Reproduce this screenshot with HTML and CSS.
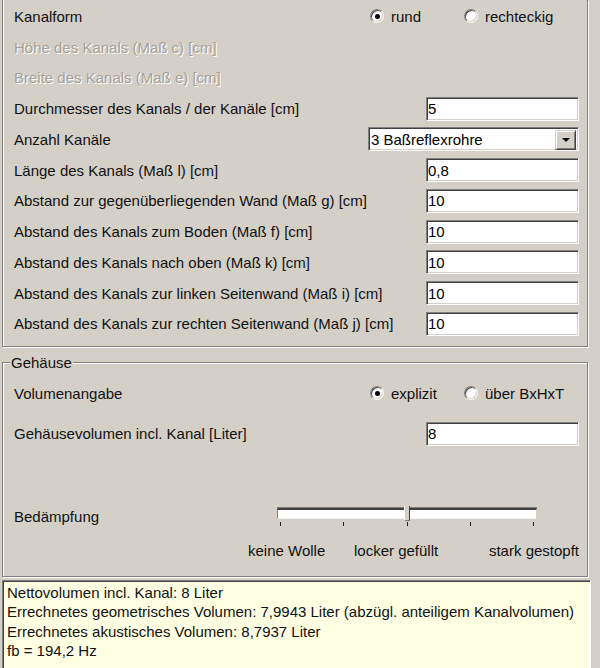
FILE: index.html
```html
<!DOCTYPE html>
<html lang="de">
<head>
<meta charset="utf-8">
<title>Kanal</title>
<link rel="stylesheet" href="styles.css">
</head>
<body>
<div class="screen">
  <div class="panel top">
    <div class="row">
      <span class="label">Kanalform</span>
      <div class="radios">
        <span class="radio"><span class="rb on"></span>rund</span>
        <span class="radio"><span class="rb"></span>rechteckig</span>
      </div>
    </div>
    <div class="row"><span class="label disabled">Höhe des Kanals (Maß c) [cm]</span></div>
    <div class="row"><span class="label disabled">Breite des Kanals (Maß e) [cm]</span></div>
    <div class="row">
      <span class="label">Durchmesser des Kanals / der Kanäle [cm]</span>
      <input class="field" type="text" value="5" readonly>
    </div>
    <div class="row">
      <span class="label">Anzahl Kanäle</span>
      <div class="select"><span class="select-text">3 Baßreflexrohre</span><span class="select-btn"><span class="arrow"></span></span></div>
    </div>
    <div class="row">
      <span class="label">Länge des Kanals (Maß l) [cm]</span>
      <input class="field" type="text" value="0,8" readonly>
    </div>
    <div class="row">
      <span class="label">Abstand zur gegenüberliegenden Wand (Maß g) [cm]</span>
      <input class="field" type="text" value="10" readonly>
    </div>
    <div class="row">
      <span class="label">Abstand des Kanals zum Boden (Maß f) [cm]</span>
      <input class="field" type="text" value="10" readonly>
    </div>
    <div class="row">
      <span class="label">Abstand des Kanals nach oben (Maß k) [cm]</span>
      <input class="field" type="text" value="10" readonly>
    </div>
    <div class="row">
      <span class="label">Abstand des Kanals zur linken Seitenwand (Maß i) [cm]</span>
      <input class="field" type="text" value="10" readonly>
    </div>
    <div class="row">
      <span class="label">Abstand des Kanals zur rechten Seitenwand (Maß j) [cm]</span>
      <input class="field" type="text" value="10" readonly>
    </div>
  </div>

  <fieldset class="group">
    <legend>Gehäuse</legend>
    <div class="group-body">
      <div class="row vol">
        <span class="label">Volumenangabe</span>
        <div class="radios">
          <span class="radio"><span class="rb on"></span>explizit</span>
          <span class="radio"><span class="rb"></span>über BxHxT</span>
        </div>
      </div>
      <div class="row gvol">
        <span class="label">Gehäusevolumen incl. Kanal [Liter]</span>
        <input class="field" type="text" value="8" readonly>
      </div>
      <div class="damp">
        <span class="label">Bedämpfung</span>
        <div class="slider">
          <div class="track"></div>
          <div class="thumb"></div>
          <div class="ticks"><i></i><i></i><i></i><i></i><i></i></div>
        </div>
      </div>
      <div class="scale">
        <span>keine Wolle</span>
        <span>locker gefüllt</span>
        <span>stark gestopft</span>
      </div>
    </div>
  </fieldset>

  <div class="output">
    <div>Nettovolumen incl. Kanal: 8 Liter</div>
    <div>Errechnetes geometrisches Volumen: 7,9943 Liter (abzügl. anteiligem Kanalvolumen)</div>
    <div>Errechnetes akustisches Volumen: 8,7937 Liter</div>
    <div>fb = 194,2 Hz</div>
  </div>
</div>
</body>
</html>
```

FILE: styles.css
```css
* { box-sizing: border-box; }

html, body {
  margin: 0;
  padding: 0;
}

body {
  width: 600px;
  height: 668px;
  overflow: hidden;
  background: #d4d0c8;
  font-family: "Liberation Sans", Arial, sans-serif;
  font-size: 15px;
  color: #000;
}

.screen {
  width: 591px;
  height: 668px;
  display: flex;
  flex-direction: column;
}

/* etched panels */
.panel.top {
  margin-left: 2px;
  width: 586px;
  height: 347px;
  border: 1px solid #808080;
  border-top: none;
  box-shadow: inset 1px 0 0 #fff, 1px 1px 0 #fff;
  padding: 1px 8px 0 11px;
}

.row {
  height: 30.75px;
  display: flex;
  align-items: center;
  justify-content: space-between;
}

.label {
  white-space: nowrap;
  color: #111;
}

.label.disabled {
  color: #a6a29a;
  text-shadow: 1px 1px 0 #fff;
}

/* radio buttons */
.radios {
  display: flex;
  width: 209px;
}

.radio {
  width: 94px;
  display: flex;
  align-items: center;
  gap: 7px;
  white-space: nowrap;
  color: #111;
}

.rb {
  position: relative;
  width: 14px;
  height: 14px;
  flex: none;
  border-radius: 50%;
  background: #fff;
  border: 1px solid;
  border-color: #808080 #f4f4f4 #f4f4f4 #808080;
  box-shadow: inset 1px 1px 0 #404040, inset -1px -1px 0 #d4d0c8;
}

.rb.on::after {
  content: "";
  position: absolute;
  left: 3.5px;
  top: 3.5px;
  width: 5px;
  height: 5px;
  border-radius: 50%;
  background: #000;
}

/* text fields */
.field {
  width: 153px;
  height: 24px;
  margin: 0;
  padding: 0 0 0 1px;
  font: inherit;
  color: #000;
  background: #fff;
  border: 1px solid;
  border-color: #808080 #ffffff #ffffff #808080;
  box-shadow: inset 1px 1px 0 #404040, inset -1px -1px 0 #d4d0c8;
  outline: none;
}

/* combo box */
.select {
  width: 211px;
  height: 24px;
  display: flex;
  align-items: center;
  background: #fff;
  border: 1px solid;
  border-color: #808080 #ffffff #ffffff #808080;
  box-shadow: inset 1px 1px 0 #404040, inset -1px -1px 0 #d4d0c8;
  padding: 2px 2px 1px 2px;
}

.select-text {
  flex: 1;
  white-space: nowrap;
}

.select-btn {
  width: 21px;
  height: 20px;
  display: flex;
  align-items: center;
  justify-content: center;
  background: #d4d0c8;
  border: 1px solid;
  border-color: #d4d0c8 #404040 #404040 #d4d0c8;
  box-shadow: inset 1px 1px 0 #fff, inset -1px -1px 0 #808080;
}

.arrow {
  width: 0;
  height: 0;
  border-left: 4px solid transparent;
  border-right: 4px solid transparent;
  border-top: 4px solid #000;
  margin-top: 1px;
}

/* group box */
.group {
  margin: 7px 0 0 2px;
  width: 586px;
  height: 223px;
  padding: 0;
  border: 1px solid #808080;
  box-shadow: inset 1px 1px 0 #fff, 1px 1px 0 #fff;
  min-width: 0;
}

.group legend {
  margin-left: 7px;
  padding: 0 1px;
  line-height: 17px;
  background: #d4d0c8;
  color: #111;
}

.group-body {
  padding: 7px 8px 0 11px;
}

.row.vol {
  height: 30px;
}

.row.gvol {
  height: 31px;
  margin-top: 10px;
}

/* damping slider */
.damp {
  margin-top: 55px;
  height: 24px;
  display: flex;
  align-items: center;
}

.slider {
  position: relative;
  width: 260px;
  height: 24px;
  margin-left: 178px;
  padding-top: 4px;
}

.track {
  height: 11px;
  background: #fff;
  border-top: 2px solid #404040;
  border-left: 1px solid #808080;
  border-right: 1px solid #d4d0c8;
  border-bottom: 1px solid #f4f4f4;
  box-shadow: 0 -1px 0 #808080;
}

.thumb {
  position: absolute;
  left: 127px;
  top: 2px;
  width: 6px;
  height: 15px;
  background: #d4d0c8;
  border-left: 1px solid #fff;
  border-right: 1px solid #404040;
  border-bottom: 1px solid #808080;
}

.ticks {
  display: flex;
  justify-content: space-between;
  padding: 0 3px;
  margin-top: 3px;
  height: 4px;
}

.ticks i {
  display: block;
  width: 1px;
  height: 4px;
  background: #202020;
}

.scale {
  display: grid;
  grid-template-columns: 106px 1fr auto;
  margin: 14px 0 0 234px;
  line-height: 18px;
  white-space: nowrap;
  color: #111;
}

/* output box */
.output {
  margin: 3px 0 0 2px;
  width: 589px;
  flex: 1;
  background: #ffffe4;
  border-top: 1px solid #808080;
  border-left: 1px solid #808080;
  border-right: 1px solid #fff;
  box-shadow: inset 1px 1px 0 #404040;
  padding: 2px 4px 0 4px;
  line-height: 19.4px;
  white-space: nowrap;
  color: #111;
}
```
